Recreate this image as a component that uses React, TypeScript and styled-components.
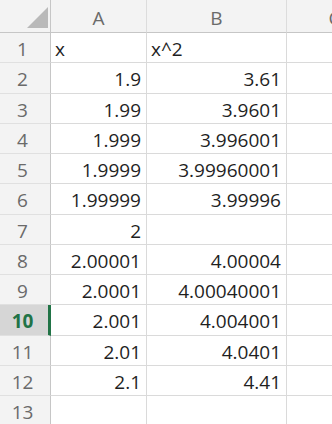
import React from "react";
import styled, { createGlobalStyle } from "styled-components";

const Global = createGlobalStyle`
  html, body { margin: 0; padding: 0; background: #ffffff; }
  body { width: 332px; height: 424px; overflow: hidden; font-family: "Open Sans", "Noto Sans", sans-serif; }
`;

const Sheet = styled.div`
  display: grid;
  grid-template-columns: 51px 96px 140px 96px;
  grid-template-rows: 33px repeat(13, 30.25px);
  width: 332px;
  height: 424px;
  overflow: hidden;
  font-family: "Open Sans", "Noto Sans", sans-serif;
  font-size: 19px;
`;

const Corner = styled.div`
  box-sizing: border-box;
  background: #f3f3f3;
  border-right: 1px solid #c6c6c6;
  border-bottom: 1px solid #c6c6c6;
  display: flex;
  justify-content: flex-end;
  align-items: flex-end;
  padding: 0 2px 4px 0;
`;

const Triangle = styled.div`
  width: 0;
  height: 0;
  border-left: 21px solid transparent;
  border-bottom: 21px solid #b9b9b9;
`;

const ColHeader = styled.div`
  box-sizing: border-box;
  background: #f3f3f3;
  border-right: 1px solid #dcdcdc;
  border-bottom: 1px solid #c6c6c6;
  color: #6a6a6a;
  display: flex;
  align-items: center;
  justify-content: center;
  padding-top: 4px;
  white-space: nowrap;
  overflow: hidden;
`;

const RowHeader = styled.div<{ $selected?: boolean }>`
  box-sizing: border-box;
  background: ${(p) => (p.$selected ? "#d6d6d6" : "#f3f3f3")};
  border-right: ${(p) => (p.$selected ? "3px solid #217346" : "1px solid #c6c6c6")};
  border-bottom: 1px solid #e0e0e0;
  color: ${(p) => (p.$selected ? "#217346" : "#6a6a6a")};
  font-weight: ${(p) => (p.$selected ? 700 : 400)};
  display: flex;
  align-items: center;
  justify-content: center;
  padding: 3px ${(p) => (p.$selected ? "3px" : "5px")} 0 0;
`;

const Cell = styled.div<{ $align: "left" | "right" }>`
  box-sizing: border-box;
  border-right: 1px solid #dadada;
  border-bottom: 1px solid #dadada;
  color: #1f1f1f;
  display: flex;
  align-items: center;
  justify-content: ${(p) => (p.$align === "left" ? "flex-start" : "flex-end")};
  padding: 3px 5px 0 4px;
  white-space: nowrap;
  overflow: visible;
`;

const rows: [string, string][] = [
  ["x", "x^2"],
  ["1.9", "3.61"],
  ["1.99", "3.9601"],
  ["1.999", "3.996001"],
  ["1.9999", "3.99960001"],
  ["1.99999", "3.99996"],
  ["2", ""],
  ["2.00001", "4.00004"],
  ["2.0001", "4.00040001"],
  ["2.001", "4.004001"],
  ["2.01", "4.0401"],
  ["2.1", "4.41"],
  ["", ""],
];

export default function App() {
  return (
    <>
      <Global />
      <Sheet>
        <Corner>
          <Triangle />
        </Corner>
        <ColHeader>A</ColHeader>
        <ColHeader>B</ColHeader>
        <ColHeader>C</ColHeader>
        {rows.map((r, i) => {
          const align = i === 0 ? "left" : "right";
          return (
            <React.Fragment key={i}>
              <RowHeader $selected={i === 9}>{i + 1}</RowHeader>
              <Cell $align={align}>{r[0]}</Cell>
              <Cell $align={align}>{r[1]}</Cell>
              <Cell $align="left"></Cell>
            </React.Fragment>
          );
        })}
      </Sheet>
    </>
  );
}
